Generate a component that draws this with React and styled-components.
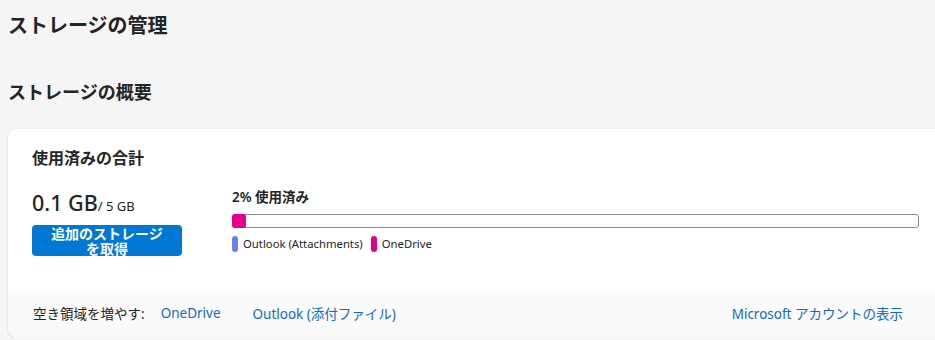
import React from "react";
import styled, { createGlobalStyle } from "styled-components";

const GlobalStyle = createGlobalStyle`
  body {
    margin: 0;
    background: #f5f5f5;
    color: #242424;
    font-family: "Noto Sans", "Noto Sans CJK JP", sans-serif;
    overflow: hidden;
  }
`;

const usage = [
  { name: "Outlook (Attachments)", color: "#6b80f0", percent: 0 },
  { name: "OneDrive", color: "#e3008c", percent: 2 },
];

const App = () => {
  return (
    <Page>
      <GlobalStyle />
      <Title>ストレージの管理</Title>
      <SubTitle>ストレージの概要</SubTitle>
      <Card>
        <CardBody>
          <CardTitle>使用済みの合計</CardTitle>
          <Summary>
            <Total>
              <Amount>
                0.1 GB<Quota>/ 5 GB</Quota>
              </Amount>
              <BuyButton>
                <ButtonLine>追加のストレージ</ButtonLine>
                <ButtonLine>を取得</ButtonLine>
              </BuyButton>
            </Total>
            <Usage>
              <UsedLabel>2% 使用済み</UsedLabel>
              <Bar>
                <Fill style={{ width: "14px" }} />
              </Bar>
              <Legend>
                {usage.map((item) => (
                  <LegendItem key={item.name}>
                    <Swatch color={item.color} />
                    {item.name}
                  </LegendItem>
                ))}
              </Legend>
            </Usage>
          </Summary>
        </CardBody>
        <Footer>
          <FooterLabel>空き領域を増やす:</FooterLabel>
          <Link>OneDrive</Link>
          <Link>Outlook (添付ファイル)</Link>
          <Spacer />
          <Link>Microsoft アカウントの表示</Link>
        </Footer>
      </Card>
    </Page>
  );
};

const Page = styled.div`
  padding: 12px 0 0 8px;
`;

const Title = styled.h1`
  margin: 0;
  font-size: 20px;
  line-height: 28px;
  font-weight: 700;
`;

const SubTitle = styled.h2`
  margin: 40px 0 0;
  font-size: 18px;
  line-height: 24px;
  font-weight: 600;
`;

const Card = styled.div`
  margin-top: 25px;
  width: 935px;
  background: #ffffff;
  border-radius: 8px;
  box-shadow: 0 1px 2px rgba(0, 0, 0, 0.14), 0 0 2px rgba(0, 0, 0, 0.08);
  overflow: hidden;
`;

const CardBody = styled.div`
  height: 160px;
  box-sizing: border-box;
  padding: 18px 24px 0;
`;

const CardTitle = styled.h3`
  margin: 0;
  font-size: 16px;
  line-height: 22px;
  font-weight: 600;
`;

const Summary = styled.div`
  display: flex;
  gap: 50px;
  margin-top: 18px;
`;

const Total = styled.div`
  width: 150px;
  display: flex;
  flex-direction: column;
`;

const Amount = styled.div`
  font-size: 21.5px;
  line-height: 32px;
  font-weight: 500;
  white-space: nowrap;
`;

const Quota = styled.span`
  font-size: 13px;
  font-weight: 400;
`;

const BuyButton = styled.button`
  margin-top: 3px;
  width: 150px;
  height: 31px;
  padding: 0;
  border: none;
  border-radius: 4px;
  background: #0078d4;
  color: #ffffff;
  font-family: inherit;
  font-size: 14px;
  font-weight: 700;
  display: flex;
  flex-direction: column;
  align-items: center;
  justify-content: center;
`;

const ButtonLine = styled.span`
  display: block;
  height: 15px;
  line-height: 15px;
`;

const Usage = styled.div`
  flex: 1;
  display: flex;
  flex-direction: column;
`;

const UsedLabel = styled.div`
  font-size: 13.5px;
  line-height: 20px;
  font-weight: 600;
`;

const Bar = styled.div`
  margin-top: 7px;
  height: 14px;
  box-sizing: border-box;
  border: 1px solid #8a8a8a;
  border-radius: 3px;
  display: flex;
  align-items: stretch;
`;

const Fill = styled.div`
  margin: -1px 0 -1px -1px;
  background: #e3008c;
  border-radius: 3px;
`;

const Legend = styled.div`
  display: flex;
  gap: 8px;
  margin-top: 8px;
`;

const LegendItem = styled.div`
  display: flex;
  align-items: center;
  gap: 5px;
  font-size: 11.3px;
  line-height: 16px;
`;

const Swatch = styled.span`
  width: 6px;
  height: 16px;
  border-radius: 3px;
  background: ${(p) => p.color};
`;

const Footer = styled.div`
  height: 48px;
  background: #fafafa;
  display: flex;
  align-items: center;
  padding: 0 24px 0 25px;
  font-size: 13.5px;
`;

const FooterLabel = styled.span`
  color: #242424;
`;

const Link = styled.a`
  padding: 0 16px;
  color: #0f6cbd;
  cursor: pointer;
`;

const Spacer = styled.div`
  flex: 1;
`;

export default App;
